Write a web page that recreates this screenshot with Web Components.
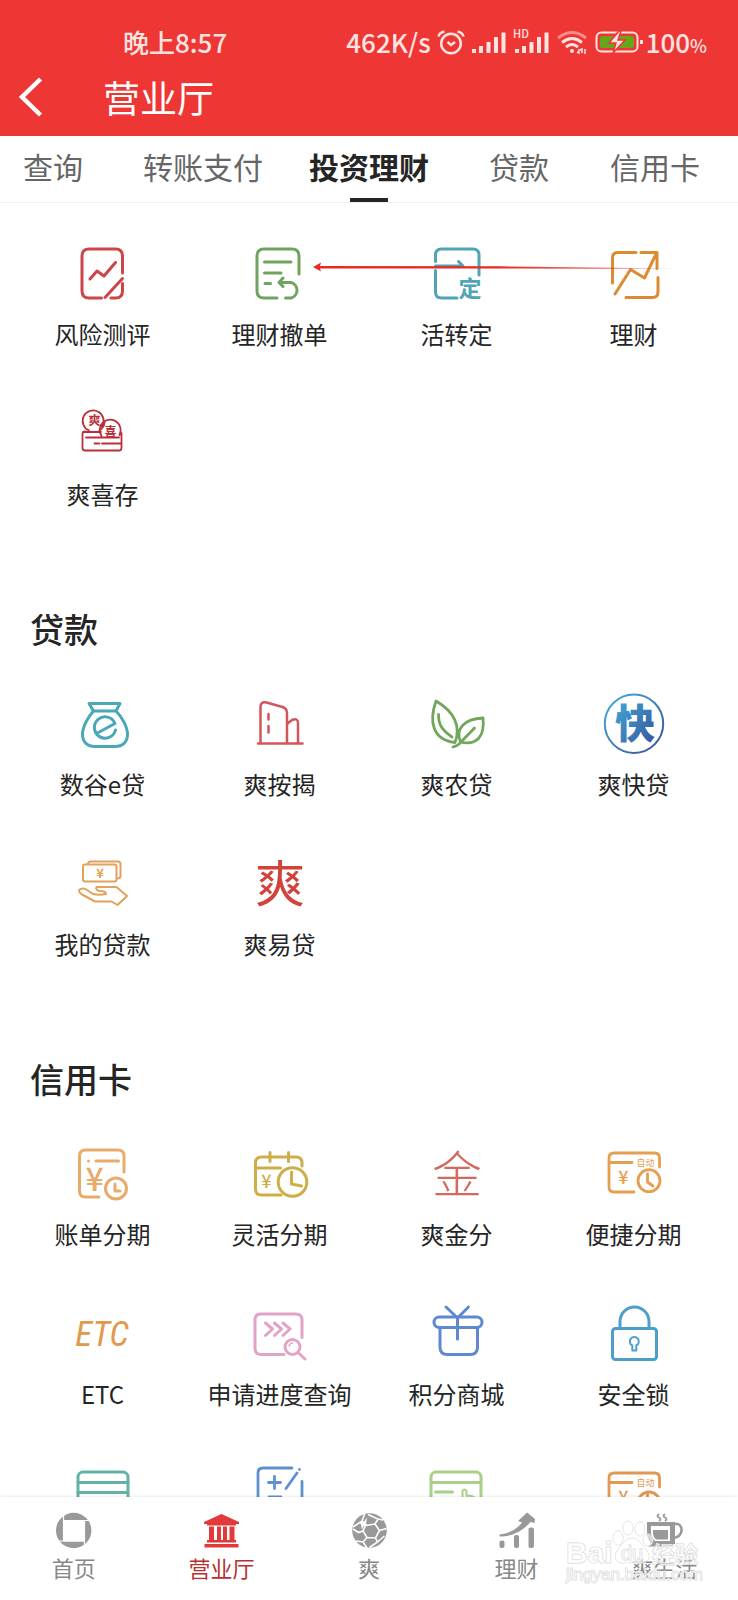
<!DOCTYPE html>
<html lang="zh-CN">
<head>
<meta charset="utf-8">
<meta name="viewport" content="width=device-width, initial-scale=1">
<title>营业厅</title>
<style>
    body {
        margin: 0;
        background: #fff;
        color: #252525;
        font-family: "Noto Sans CJK SC", "Noto Sans", sans-serif;
    }

    svg {
        overflow: visible;
    }

    /* small characters inside the icons */
    svg text {
        fill: currentColor;
        stroke: none;
        text-anchor: middle;
    }

    svg .solid {
        fill: currentColor;
        stroke: none;
    }

    svg .cut {
        stroke: #fff;
    }
</style>
</head>
<body>
<hall-app>
    <hall-status slot="top"></hall-status>
    <hall-title slot="top">营业厅</hall-title>
    <hall-tabs slot="tabs">
        <hall-tab>查询</hall-tab>
        <hall-tab>转账支付</hall-tab>
        <hall-tab active>投资理财</hall-tab>
        <hall-tab>贷款</hall-tab>
        <hall-tab>信用卡</hall-tab>
    </hall-tabs>

    <hall-section>
        <hall-tile label="风险测评" style="color:#cb4549">
            <svg viewBox="0 0 64 64"><path d="M51.5 31V14q0-7-7-7H18q-7 0-7 7v35q0 7 7 7h12.500M34 55.500l17.500-19M51.500 41.500V49q0 7-7 7H40M19 37l7-8 7 5 11.500-13.500"/></svg>
        </hall-tile>
        <hall-tile label="理财撤单" style="color:#70a45e">
            <svg viewBox="0 0 64 64"><path d="M51 32V14q0-7-7-7H16q-7 0-7 7v35q0 7 7 7h13M16.500 20H43M16.500 31H33M17 41.500h5.500M31.500 40.500H43a8 8 0 0 1 0 15.500h-5.500M35 36l-4 4.500 4 4"/></svg>
        </hall-tile>
        <hall-tile label="活转定" style="color:#50a4b4">
            <svg viewBox="0 0 64 64"><path d="M10.500 19.500V13q0-6 6-6H48q6 0 6 6v20M10.500 28.500V50q0 6 6 6H32M10.500 24H38l-4.500-4.500"/><text x="45" y="55" font-size="23" font-weight="700">定</text></svg>
        </hall-tile>
        <hall-tile label="理财" style="color:#db8b31">
            <svg viewBox="0 0 64 64"><path d="M10.500 41V16q0-5.500 5.500-5.500h18M39 10.500h16v16M56 35.500V50q0 5.500-5.500 5.500H24M13 52l15.500-24.500 14 8.500 12-25"/></svg>
        </hall-tile>
        <hall-tile label="爽喜存" style="color:#b92f3a">
            <svg viewBox="0 0 64 64" stroke-width="1.800"><path d="M14 29.500q-2.500 0-2.500 2.500v14q0 2.500 2.500 2.500h34q2.500 0 2.500-2.500V31M12 30h18M15 35.500h33M23.500 41.500h5M31 41.500h19M30.500 34a10.500 10.500 0 1 1 18-1M31 24.500a10.500 10.500 0 1 0-13 4"/><path d="M33.500 20a10.500 10.500 0 0 1-5 8.500"/><text x="23.500" y="23" font-size="12" font-weight="700">爽</text><text x="39.500" y="34" font-size="12" font-weight="700">喜</text></svg>
        </hall-tile>
        <hall-pointer slot="over"></hall-pointer>
    </hall-section>

    <hall-section heading="贷款">
        <hall-tile label="数谷e贷" style="color:#49a8b5">
            <svg viewBox="0 0 64 64"><path d="M18 11.500h31l-4 7.500H22.500ZM22.500 19C17 25 11.500 35 11.500 42.500c0 7.500 5 12 12.500 12h20c7.500 0 12.500-4.500 12.500-12C56.500 35 51 25 45 19M25.500 41.500l18.500-10a10.700 10.700 0 1 0 .5 6.500"/></svg>
        </hall-tile>
        <hall-tile label="爽按揭" style="color:#d2555e">
            <svg viewBox="0 0 64 64" stroke-width="2.500"><path d="M10 51.500h44.500M12.500 51V15q0-6 6-4.500l16 4.500q4.500 1.500 4.500 6V51M39 32l5-4q6-2.500 6 3v20M20.500 22v5.500M20.500 34v6.500"/></svg>
        </hall-tile>
        <hall-tile label="爽农贷" style="color:#72a65d">
            <svg viewBox="0 0 64 64" stroke-width="2.800"><path d="M11 9C4 29 7 48 30 50.500 36 35 30 20 11 9ZM13.500 22.500c0 10 3 15 13.500 22.500M58 26C39 27 30 37 35.500 50 52 54 60 44 58 26ZM49.500 36 36 50q-3 4-8 5"/></svg>
        </hall-tile>
        <hall-tile label="爽快贷">
            <svg viewBox="0 0 64 64" stroke-width="2"><defs><linearGradient id="blue" x1="0" y1="0" x2="1" y2="1"><stop offset="0" stop-color="#3fb0e0"/><stop offset="1" stop-color="#3a4f96"/></linearGradient></defs><circle cx="32" cy="31.700" r="29.200" stroke="url(#blue)"/><text x="33" y="46" font-size="40" font-weight="900" style="fill:url(#blue)">快</text></svg>
        </hall-tile>
        <hall-tile label="我的贷款" style="color:#e2a25a">
            <svg viewBox="0 0 64 64" stroke-width="2"><rect x="12" y="12.500" width="33.500" height="17" rx="2"/><path d="M17 12q0-2.500 2.500-2.500h27.500q2.500 0 2.500 2.500v12q0 2.500-3.500 2.500M8 38q4-3 8 0l6 4q6 1.500 13 0 0-3-6-3-5-1-3.500-4h20L56 44l-9.500 9-6-3.500H24L12 43q-4-2-4-5Z"/><text x="29" y="26" font-size="13" font-weight="700">¥</text></svg>
        </hall-tile>
        <hall-tile label="爽易贷" style="color:#d0443d">
            <svg viewBox="0 0 64 64"><text x="32" y="50" font-size="50">爽</text></svg>
        </hall-tile>
    </hall-section>

    <hall-section heading="信用卡">
        <hall-tile label="账单分期" style="color:#e8ab6c">
            <svg viewBox="0 0 64 64"><path d="M53 30V14q0-6-6-6H14.500q-6 0-6 6v35q0 6 6 6H28M17.500 19v.1M25 19h22.500M44 42v7h5"/><circle cx="45" cy="46.500" r="10.500"/><text x="23.500" y="49" font-size="32" font-weight="500">¥</text></svg>
        </hall-tile>
        <hall-tile label="灵活分期" style="color:#cdae48">
            <svg viewBox="0 0 64 64"><path d="M54 24v-3q0-6-6-6H13.500q-6 0-6 6v26q0 6 6 6H33M7.500 26H32.500M22 10.500v9M40.500 10.500v9M43.500 30v12l10 2"/><circle cx="44.500" cy="40" r="14.300"/><text x="18.500" y="45.500" font-size="18" font-weight="500">¥</text></svg>
        </hall-tile>
        <hall-tile label="爽金分" style="color:#d46a5e">
            <svg viewBox="0 0 64 64"><text x="32" y="51" font-size="50" font-weight="300">金</text></svg>
        </hall-tile>
        <hall-tile label="便捷分期" style="color:#e69e50">
            <svg viewBox="0 0 64 64" stroke-width="2.800"><path d="M57.500 25v-9q0-5-5-5H12q-5 0-5 5v29q0 5 5 5h20M7 20.500h23M45.500 32v8l5.500 4"/><circle cx="47" cy="38.700" r="11"/><text x="21.500" y="41.500" font-size="18" font-weight="500">¥</text><text x="43.500" y="24" font-size="9">自动</text></svg>
        </hall-tile>
        <hall-tile label="ETC" style="color:#e1994c">
            <svg viewBox="0 0 64 64"><text x="31" y="44" font-size="35" font-style="italic" font-family="Liberation Sans Narrow, Roboto Condensed, Open Sans, sans-serif">ETC</text></svg>
        </hall-tile>
        <hall-tile label="申请进度查询" style="color:#e2a4c6">
            <svg viewBox="0 0 64 64"><path d="M54 35.500V18q0-6-6-6H13q-6 0-6 6v28.500q0 6 6 6h23M17.500 21l7 6-7 6.500M26.500 21l7 6-7 6.500M35 21l7 6-7 6.500M50.500 51l6.500 6"/><circle cx="44.500" cy="45" r="7.500"/><path d="M41 44q1-3 3.500-3" stroke-width="1.500"/></svg>
        </hall-tile>
        <hall-tile label="积分商城" style="color:#5f88ce">
            <svg viewBox="0 0 64 64"><rect x="9" y="15" width="48" height="10.500" rx="5.200"/><path d="M15 25.500V45q0 7.500 7.500 7.500H45q7.500 0 7.500-7.500V25.500M32.500 37V16L21 5M32.500 16 43.500 5"/></svg>
        </hall-tile>
        <hall-tile label="安全锁" style="color:#4d9fca">
            <svg viewBox="0 0 64 64"><rect x="10.500" y="26.500" width="44" height="31" rx="3"/><path d="M18 26V19.500a14.500 14.500 0 0 1 29 0V26"/><path d="M30.300 43.500a4.500 4.500 0 1 1 4 0v5h-4Z" stroke-width="2"/></svg>
        </hall-tile>
        <hall-tile name="银行卡" style="color:#62b3a5">
            <svg viewBox="0 0 64 64"><rect x="7" y="10" width="50" height="42" rx="5"/><path d="M7 20.500h50M7 30.500h50"/></svg>
        </hall-tile>
        <hall-tile name="额度调整" style="color:#5f91d0">
            <svg viewBox="0 0 64 64" stroke-width="2.800"><path d="M44 6H15q-5 0-5 5v40q0 5 5 5h34q5 0 5-5V19.500M26.500 14.500v12M20.500 20.500h12M49 11 38 26.500M51.500 7.500v.1M21 35h12"/></svg>
        </hall-tile>
        <hall-tile name="卡片激活" style="color:#a8d08b">
            <svg viewBox="0 0 64 64"><rect x="6" y="10" width="50" height="42" rx="5"/><path d="M6 20.500h50M10.500 30h17"/><path d="M37.500 44V29q2-3 4 0v5q6-1 10 3v7" stroke-width="2"/></svg>
        </hall-tile>
        <hall-tile name="自动分期" style="color:#e29852">
            <svg viewBox="0 0 64 64" stroke-width="2.800"><path d="M57.500 25v-9q0-5-5-5H12q-5 0-5 5v29q0 5 5 5h20M7 20.500h23M45.500 32v8l5.500 4"/><circle cx="47" cy="41" r="11"/><text x="21.500" y="41.500" font-size="18" font-weight="500">¥</text><text x="43.500" y="24" font-size="9">自动</text></svg>
        </hall-tile>
    </hall-section>

    <hall-nav slot="bottom">
        <hall-nav-item label="首页">
            <svg viewBox="0 0 38 38"><circle class="solid" cx="18.700" cy="18.500" r="17.700"/><path fill="#fff" stroke="none" d="M8 8h22v21.500H8z"/><path class="cut" stroke-width="1.200" d="M8.500 3v26M3 29h27M29.500 34V8M34 8.500H8"/></svg>
        </hall-nav-item>
        <hall-nav-item label="营业厅" active>
            <svg viewBox="0 0 38 38"><path class="solid" d="M2 10 19.500 2 37 10v2H34v1.500H5V12H2zM7 14.500h5V28H7zM15 14.500h4V28h-4zM21 14.500h4V28h-4zM27.500 14.500h5V28h-5zM5 28h29v2.500H5zM2.500 32h34v3.500h-34z"/></svg>
        </hall-nav-item>
        <hall-nav-item label="爽">
            <svg viewBox="0 0 38 38"><circle class="solid" cx="19.500" cy="18.500" r="17.300"/><path class="cut" stroke-width="1.600" d="M15.500 13.500 25 12l4.500 6.500-4 7.500-8.500-.5L13 19ZM15.500 13.500 12 9l-9 6M12 9l3-8M25 12l3-5-10-4.500M28 7l5 1M29.500 18.500l7-2M25.500 26l2 4-8 5.500M27.500 30l7-6M17 25.500l-4 4.500-7-1M13 30l4 6M13 19l-4.500 1.500L3 17"/><path d="m9 10 5-.5 3-4-1 6 2 2-4 0-2 4-1-5z" fill="#fff" stroke="none"/></svg>
        </hall-nav-item>
        <hall-nav-item label="理财">
            <svg viewBox="0 0 38 38"><g class="solid"><rect x="1.500" y="28.500" width="5" height="7.500" rx="2"/><rect x="16" y="23" width="5" height="13" rx="2"/><rect x="30.500" y="15.500" width="5.500" height="20.500" rx="2"/><path d="M1.500 22.500C12 21 19 17 24 10.500l-4-1.500L29 .5 37 7l-.5 4-4-1C25 19 13 25 1.500 24.500z"/></g></svg>
        </hall-nav-item>
        <hall-nav-item label="爽生活">
            <svg viewBox="0 0 38 38"><g class="solid"><path d="M2 10h28v22H6q-4-5-4-11zM5 32h23v2.500H3z"/></g><path fill="#fff" stroke="none" d="M6 14h19v15H10q-4-4-4-8z"/><path class="solid" d="M8 18h15v9.500H11q-3-3-3-6z"/><path d="M30 12h3q4 2 3.500 7-1 6-8 7" stroke-width="2.500"/><path d="M14 2q-3 2 0 3.500t0 3.500M20 2q-3 2 0 3.500t0 3.500" stroke-width="1.800"/></svg>
        </hall-nav-item>
        <hall-mark slot="over"></hall-mark>
    </hall-nav>
</hall-app>

<script>
    // attaches an open shadow root and fills it
    function build(el, html) {
        const root = el.attachShadow({ mode: 'open' })
        const tpl = document.createElement('template')
        tpl.innerHTML = html
        root.appendChild(tpl.content.cloneNode(true))
        return root
    }

    class HallApp extends HTMLElement {
        constructor() {
            super()
            build(this, `
            <style>
                :host{
                    display:flex;
                    flex-direction:column;
                    height:100vh;
                }
                header{
                    background:#ee3635;
                    color:#fff;
                }
                main{
                    flex:1;
                    min-height:0;
                    overflow-y:auto;
                    scrollbar-width:none;
                }
            </style>
            <header><slot name="top"></slot></header>
            <slot name="tabs"></slot>
            <main><slot></slot></main>
            <slot name="bottom"></slot>
            `)
        }
    }

    class HallStatus extends HTMLElement {
        constructor() {
            super()
            build(this, `
            <style>
                :host{
                    display:flex;
                    justify-content:space-between;
                    padding:24px 31px 2px 123px;
                    font-size:26px;
                    font-weight:500;
                    line-height:36px;
                    color:#ffe3e0;
                }
                div{
                    display:flex;
                    align-items:center;
                }
                .net{ margin-right:6px }
                .icons{ gap:7px }
                svg{
                    display:block;
                    overflow:visible;
                    fill:none;
                    stroke:currentColor;
                    stroke-width:2.5;
                }
                svg text{ fill:currentColor; stroke:none; font-size:11px }
                .full{ margin-left:3px }
                small{ font-size:18px; line-height:1 }
            </style>
            <span>晚上8:57</span>
            <div>
                <span class="net">462K/s</span>
                <div class="icons">
                    <svg width="28" height="26" viewBox="0 0 28 26"><circle cx="14" cy="14.500" r="9.800"/><path d="M1.500 7.500q1-4 6-5M26.500 7.500q-1-4-6-5M10.500 13l3.500 3 4-3"/></svg>
                    <svg width="34" height="26" viewBox="0 0 34 26"><path style="stroke-width:4" d="M2 24v-4M9 24v-7M16.500 24V13M24 24V8M31.500 24V3.500"/></svg>
                    <svg width="36" height="26" viewBox="0 0 36 26"><path style="stroke-width:4" d="M4 24v-4M11 24v-7M18.500 24V13M26 24V8M33.500 24V3.500"/><text x="0" y="9">HD</text></svg>
                    <svg width="32" height="26" viewBox="0 0 32 26"><path opacity=".5" style="stroke-width:3" d="M2 9q14-11 28 0"/><path style="stroke-width:3" d="M6 13.500q10-8 20 0M10 18q6-5 12 0"/><circle cx="16" cy="22" r="2" fill="currentColor" stroke="none"/><path style="stroke-width:1.500" d="M23 20v4l-2-1M26 24v-4l-2 1M29 20v5"/></svg>
                    <svg width="48" height="26" viewBox="0 0 48 26"><rect x="1.500" y="3.500" width="41" height="19" rx="5" style="stroke-width:2"/><rect x="5" y="7" width="34" height="12" rx="2" fill="#69a51b" stroke="none"/><path d="M46.500 11v4" style="stroke-width:3"/><path d="M24 2 14 14h7l-3 10 12-13h-7l3-9z" fill="currentColor" stroke="#ee3635" style="stroke-width:1.500"/></svg>
                </div>
                <span class="full">100<small>%</small></span>
            </div>
            `)
        }
    }

    class HallTitle extends HTMLElement {
        constructor() {
            super()
            build(this, `
            <style>
                :host{
                    display:flex;
                    align-items:center;
                    gap:49px;
                    padding:8px 16px 12px;
                }
                button{
                    padding:0;
                    border:0;
                    background:none;
                    color:inherit;
                }
                svg{ display:block }
                h1{
                    margin:0;
                    font-size:37px;
                    font-weight:400;
                    line-height:54px;
                }
            </style>
            <button aria-label="返回"><svg width="38" height="42" viewBox="0 0 38 42" fill="none" stroke="currentColor" stroke-width="4.500"><path d="M24.500 3 6 21l18.500 18"/></svg></button>
            <h1><slot></slot></h1>
            `)
        }
    }

    class HallTabs extends HTMLElement {
        constructor() {
            super()
            build(this, `
            <style>
                :host{
                    display:grid;
                    grid-template-columns:120fr 166fr 180fr 121fr 128fr;
                    padding-left:23px;
                    border-bottom:1px solid #efefef;
                }
            </style>
            <slot></slot>
            `)
        }
    }

    class HallTab extends HTMLElement {
        constructor() {
            super()
            build(this, `
            <style>
                :host{
                    display:flex;
                    color:#666;
                }
                button{
                    display:flex;
                    flex-direction:column;
                    align-items:center;
                    gap:10px;
                    padding:8px 0 0;
                    border:0;
                    background:none;
                    font:inherit;
                    font-size:30px;
                    line-height:44px;
                    color:inherit;
                    white-space:nowrap;
                }
                button::after{
                    content:"";
                    width:38px;
                    height:4px;
                }
                :host([active]){
                    color:#252525;
                    font-weight:700;
                }
                :host([active]) button::after{ background:#252525 }
            </style>
            <button><slot></slot></button>
            `)
        }
    }

    class HallSection extends HTMLElement {
        constructor() {
            super()
            const heading = this.getAttribute('heading')
            build(this, `
            <style>
                :host{
                    display:block;
                    position:relative;
                    padding:39px 16px 58px 14px;
                }
                h2{
                    margin:0 0 43px;
                    padding-left:16px;
                    font-size:34px;
                    font-weight:500;
                    line-height:40px;
                }
                .grid{
                    display:grid;
                    grid-template-columns:repeat(4,1fr);
                    row-gap:50px;
                }
            </style>
            ${heading ? `<h2>${heading}</h2>` : ''}
            <div class="grid"><slot></slot></div>
            <slot name="over"></slot>
            `)
        }
    }

    class HallTile extends HTMLElement {
        constructor() {
            super()
            const label = this.getAttribute('label')
            const name = this.getAttribute('name')
            build(this, `
            <style>
                :host{
                    display:block;
                    min-width:0;
                    stroke-width:3;
                }
                button{
                    display:flex;
                    flex-direction:column;
                    align-items:center;
                    gap:10px;
                    width:100%;
                    padding:0;
                    border:0;
                    background:none;
                    font:inherit;
                    color:inherit;
                }
                ::slotted(svg){
                    display:block;
                    width:64px;
                    height:64px;
                    fill:none;
                    stroke:currentColor;
                    stroke-linecap:round;
                    stroke-linejoin:round;
                }
                span{
                    font-size:24px;
                    line-height:36px;
                    color:#252525;
                    white-space:nowrap;
                }
            </style>
            <button ${name ? `aria-label="${name}"` : ''}>
                <slot></slot>
                ${label ? `<span>${label}</span>` : ''}
            </button>
            `)
        }
    }

    // red arrow lying over the first row
    class HallPointer extends HTMLElement {
        constructor() {
            super()
            build(this, `
            <style>
                :host{
                    display:block;
                    position:absolute;
                    top:58px;
                    left:42.3%;
                    pointer-events:none;
                }
                svg{ display:block }
            </style>
            <svg width="370" height="14" viewBox="0 0 370 14">
                <defs><linearGradient id="fade"><stop offset=".5" stop-color="#e52b22"/><stop offset=".8" stop-color="#e52b22" stop-opacity=".7"/><stop offset="1" stop-color="#e52b22" stop-opacity="0"/></linearGradient></defs>
                <path fill="url(#fade)" d="M1 6 9 1.500 8 5l180 .3 178 2.200v.5L188 7.500 8 7.500 9 10.500z"/>
            </svg>
            `)
        }
    }

    class HallNav extends HTMLElement {
        constructor() {
            super()
            build(this, `
            <style>
                :host{
                    display:block;
                    position:relative;
                    background:#fff;
                    box-shadow:0 -1px 3px rgba(0,0,0,.08);
                }
                nav{
                    display:grid;
                    grid-template-columns:repeat(5,1fr);
                    padding:15px 0 18px;
                }
            </style>
            <nav><slot></slot></nav>
            <slot name="over"></slot>
            `)
        }
    }

    class HallNavItem extends HTMLElement {
        constructor() {
            super()
            build(this, `
            <style>
                :host{
                    display:block;
                    color:#999;
                }
                a{
                    display:flex;
                    flex-direction:column;
                    align-items:center;
                    gap:2px;
                    color:inherit;
                    text-decoration:none;
                }
                ::slotted(svg){
                    display:block;
                    width:38px;
                    height:38px;
                    fill:none;
                    stroke:currentColor;
                }
                span{
                    font-size:22px;
                    line-height:30px;
                    color:#888;
                }
                :host([active]){ color:#e2393b }
                :host([active]) span{ color:#b8302f }
            </style>
            <a href="#"><slot></slot><span>${this.getAttribute('label')}</span></a>
            `)
        }
    }

    // translucent stamp in the bottom corner
    class HallMark extends HTMLElement {
        constructor() {
            super()
            build(this, `
            <style>
                :host{
                    display:block;
                    position:absolute;
                    right:36px;
                    bottom:17px;
                    pointer-events:none;
                }
                svg{
                    display:block;
                    overflow:visible;
                    fill:rgba(255,255,255,.6);
                    stroke:#d8d8d8;
                    stroke-width:1;
                    paint-order:stroke;
                }
                text{ font-family:"Liberation Sans","Noto Sans CJK SC",sans-serif }
            </style>
            <svg width="136" height="70" viewBox="0 0 136 70">
                <ellipse cx="52" cy="25" rx="5" ry="7"/>
                <ellipse cx="62" cy="15" rx="5" ry="7"/>
                <ellipse cx="74" cy="16" rx="5" ry="7"/>
                <ellipse cx="82" cy="27" rx="5" ry="6"/>
                <path d="M66 25c7 0 10 8 15 13 5 6 0 13-7 12-5-1-11-1-16 0-8 1-11-6-7-12 5-6 8-13 15-13Z"/>
                <text x="0" y="50" font-size="30" font-weight="700">Bai</text>
                <text x="55" y="47" font-size="20">du</text>
                <text x="86" y="50" font-size="23" font-weight="700">经验</text>
                <text x="0" y="67" font-size="17">jingyan.baidu.com</text>
            </svg>
            `)
        }
    }

    window.customElements.define('hall-app', HallApp)
    window.customElements.define('hall-status', HallStatus)
    window.customElements.define('hall-title', HallTitle)
    window.customElements.define('hall-tabs', HallTabs)
    window.customElements.define('hall-tab', HallTab)
    window.customElements.define('hall-section', HallSection)
    window.customElements.define('hall-tile', HallTile)
    window.customElements.define('hall-pointer', HallPointer)
    window.customElements.define('hall-nav', HallNav)
    window.customElements.define('hall-nav-item', HallNavItem)
    window.customElements.define('hall-mark', HallMark)
</script>
</body>
</html>
